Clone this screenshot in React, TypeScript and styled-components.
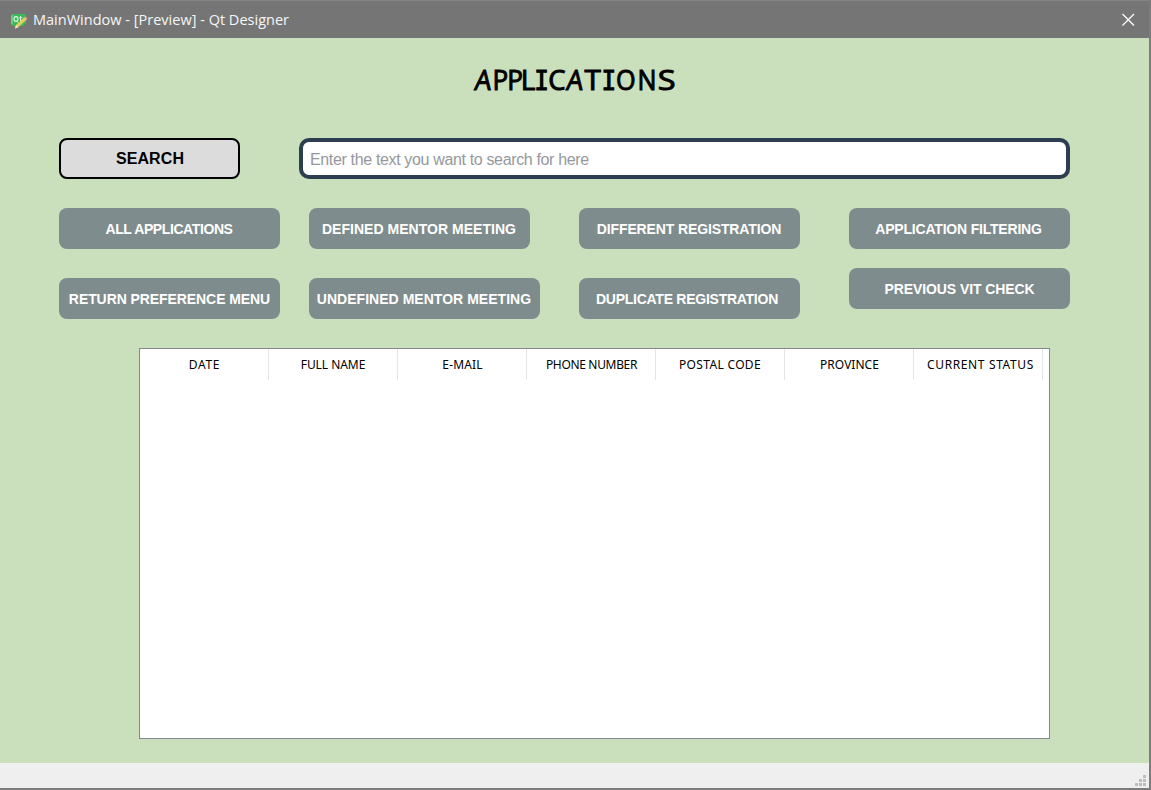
import React from "react";
import styled, { createGlobalStyle } from "styled-components";

const GlobalStyle = createGlobalStyle`
  * { box-sizing: border-box; }
  body { margin: 0; }
`;

const Window = styled.div`
  display: flex;
  flex-direction: column;
  width: 1151px;
  height: 790px;
  overflow: hidden;
  background: #cadfbc;
  border-right: 2px solid #7c7c7c;
  border-bottom: 2px solid #7c7c7c;
  font-family: "Liberation Sans", Arial, sans-serif;
`;

const TitleBar = styled.header`
  display: flex;
  align-items: center;
  height: 38px;
  margin-right: -2px;
  padding: 0 16px 0 10px;
  flex: none;
  background: #757575;
  border-top: 1px solid #858585;
  color: #f6f6f6;
`;

const WindowTitle = styled.span`
  flex: 1;
  margin-left: 5px;
  font: 14.5px "Open Sans", sans-serif;
  letter-spacing: 0.01px;
  white-space: nowrap;
`;

const Content = styled.main`
  display: flex;
  flex-direction: column;
  flex: 1;
  padding: 21px 79px 0 59px;
`;

const Heading = styled.h1`
  display: flex;
  align-items: baseline;
  height: 41px;
  margin: 0 0 0 415px;
  font: 500 28px/40px "Open Sans", sans-serif;
  color: #000;
  -webkit-text-stroke: 1px #000;
  stroke-linejoin: round;
`;

const Letter = styled.span<{ $w: number; $sx: number; $serif?: boolean; $skew?: number }>`
  display: flex;
  justify-content: center;
  width: ${(p) => p.$w}px;
  font-family: ${(p) => (p.$serif ? '"DejaVu Sans Mono", monospace' : "inherit")};
  font-size: ${(p) => (p.$serif ? 27 : 28)}px;
  transform: scaleX(${(p) => p.$sx}) skewX(${(p) => p.$skew ?? 0}deg);
`;

const SearchRow = styled.div`
  display: flex;
  justify-content: space-between;
  height: 41px;
  margin: 38px 0 29px;
`;

const SearchButton = styled.button`
  width: 181px;
  padding: 1px 0 0 1px;
  border: 2px solid #000;
  border-radius: 8px;
  background: #dcdcdc;
  color: #000;
  font: bold 16px "Liberation Sans", sans-serif;
  letter-spacing: 0.1px;
`;

const SearchInput = styled.input`
  width: 771px;
  padding: 2px 7px 0;
  border: 4px solid #2c3e50;
  border-radius: 10px;
  background: #fff;
  font: 16px "Liberation Sans", sans-serif;
  letter-spacing: -0.35px;
  &::placeholder { color: #95989c; opacity: 1; }
`;

const Actions = styled.div`
  display: grid;
  grid-template-columns: 250px 270px 270px 221px;
  height: 111px;
  flex: none;
`;

const ActionColumn = styled.div<{ $gap: number }>`
  display: flex;
  flex-direction: column;
  align-items: flex-start;
  gap: ${(p) => p.$gap}px;
`;

const ActionButton = styled.button<{ $wide?: boolean; $spacing: number; $trail?: number }>`
  width: ${(p) => (p.$wide ? 231 : 221)}px;
  height: 41px;
  padding: 1px ${(p) => p.$trail ?? 1}px 0 0;
  border: 0;
  border-radius: 8px;
  background: #7f8c8d;
  color: #fff;
  font: bold 14px "Liberation Sans", sans-serif;
  letter-spacing: ${(p) => p.$spacing}px;
  white-space: nowrap;
`;

const Table = styled.div`
  width: 911px;
  height: 391px;
  margin: 29px 0 0 80px;
  border: 1px solid #828790;
  background: #fff;
`;

const HeaderRow = styled.div`
  display: flex;
  height: 31px;
`;

const HeaderCell = styled.div<{ $spacing: number; $indent?: number }>`
  width: 129px;
  padding-left: ${(p) => p.$indent ?? 1}px;
  border-right: 1px solid #e5e5e5;
  text-align: center;
  font: 12px/31px "Noto Sans", sans-serif;
  letter-spacing: ${(p) => p.$spacing}px;
  color: #000;
  white-space: nowrap;
`;

const StatusBar = styled.footer`
  display: flex;
  align-items: flex-end;
  justify-content: flex-end;
  height: 25px;
  padding: 0 3px 2px 0;
  flex: none;
  background: #efefef;
`;

const AppIcon = () => (
  <svg width="18" height="18" viewBox="0 0 18 18">
    <path d="M3 3h13v9l-3 3H2.500L1 13V5z" fill="#38b85a" />
    <path d="M1 5l2-2v10.500L1 13z" fill="#66cf7e" />
    <ellipse cx="6" cy="8" rx="2" ry="2.400" fill="none" stroke="#e5f8e8" strokeWidth="1.1" />
    <path d="M6.500 10l1.500 1.500M10.500 5v6M9.300 6.700h3" stroke="#d5f2da" strokeWidth="1" />
    <path d="M5 17.500l1-3.500 8-7.500 2.500 2.200-8.300 7.500z" fill="#e5cd59" />
    <path d="M14 6.500l1.200-1.100 2.300 2.200-1 1.100z" fill="#eaa49a" />
    <path d="M5 17.500l1-3.500 2.200 2.200z" fill="#f5ebca" />
  </svg>
);

const CloseIcon = () => (
  <svg width="14" height="14" viewBox="0 0 14 14">
    <path d="M1.500 1l11.500 11.500M13 1L1.500 12.500" stroke="#fff" strokeWidth="1.3" />
  </svg>
);

const SizeGrip = () => (
  <svg width="11" height="11" viewBox="0 0 11 11" fill="#bdbdbd">
    {[[8, 0], [4, 4], [8, 4], [0, 8], [4, 8], [8, 8]].map(([x, y]) => (
      <rect key={`${x}-${y}`} x={x} y={y} width="3" height="3" />
    ))}
  </svg>
);

type Glyph = { c: string; w: number; sx: number; serif?: boolean; skew?: number };
const heading: Glyph[] = [
  { c: "A", w: 19, sx: 0.93, skew: -7 },
  { c: "P", w: 14.5, sx: 0.93 },
  { c: "P", w: 14, sx: 0.93 },
  { c: "L", w: 13, sx: 1 },
  { c: "I", w: 13, sx: 0.9, serif: true },
  { c: "C", w: 18, sx: 0.98 },
  { c: "A", w: 18.5, sx: 0.93, skew: -7 },
  { c: "T", w: 17.5, sx: 1.06 },
  { c: "I", w: 13.5, sx: 0.9, serif: true },
  { c: "O", w: 21.5, sx: 0.9 },
  { c: "N", w: 20, sx: 0.9 },
  { c: "S", w: 19.5, sx: 1.16 },
];

type Action = { label: string; spacing: number; wide?: boolean; trail?: number };
const columns: { gap: number; items: Action[] }[] = [
  { gap: 29, items: [{ label: "ALL APPLICATIONS", spacing: -0.4 }, { label: "RETURN PREFERENCE MENU", spacing: -0.08, trail: 0 }] },
  { gap: 29, items: [{ label: "DEFINED MENTOR MEETING", spacing: 0.03 }, { label: "UNDEFINED MENTOR MEETING", spacing: 0.03, wide: true }] },
  { gap: 29, items: [{ label: "DIFFERENT REGISTRATION", spacing: -0.13 }, { label: "DUPLICATE REGISTRATION", spacing: -0.26, trail: 5 }] },
  { gap: 19, items: [{ label: "APPLICATION FILTERING", spacing: -0.2, trail: 2 }, { label: "PREVIOUS VIT CHECK", spacing: -0.08, trail: 0 }] },
];

const headers = [
  { label: "DATE", spacing: 0.7 },
  { label: "FULL NAME", spacing: -0.05, indent: 0 },
  { label: "E-MAIL", spacing: 0.15 },
  { label: "PHONE NUMBER", spacing: -0.33 },
  { label: "POSTAL CODE", spacing: 0.33, indent: 0 },
  { label: "PROVINCE", spacing: 0.03 },
  { label: "CURRENT STATUS", spacing: 0.63, indent: 5 },
];

export default function App() {
  return (
    <>
      <GlobalStyle />
      <Window>
        <TitleBar>
          <AppIcon />
          <WindowTitle>MainWindow - [Preview] - Qt Designer</WindowTitle>
          <CloseIcon />
        </TitleBar>
        <Content>
          <Heading>
            {heading.map((g, i) => (
              <Letter key={i} $w={g.w} $sx={g.sx} $serif={g.serif} $skew={g.skew}>{g.c}</Letter>
            ))}
          </Heading>
          <SearchRow>
            <SearchButton>SEARCH</SearchButton>
            <SearchInput placeholder="Enter the text you want to search for here" />
          </SearchRow>
          <Actions>
            {columns.map((col) => (
              <ActionColumn key={col.items[0].label} $gap={col.gap}>
                {col.items.map((b) => (
                  <ActionButton key={b.label} $wide={b.wide} $spacing={b.spacing} $trail={b.trail}>{b.label}</ActionButton>
                ))}
              </ActionColumn>
            ))}
          </Actions>
          <Table>
            <HeaderRow>
              {headers.map((h) => (
                <HeaderCell key={h.label} $spacing={h.spacing} $indent={h.indent}>{h.label}</HeaderCell>
              ))}
            </HeaderRow>
          </Table>
        </Content>
        <StatusBar><SizeGrip /></StatusBar>
      </Window>
    </>
  );
}
